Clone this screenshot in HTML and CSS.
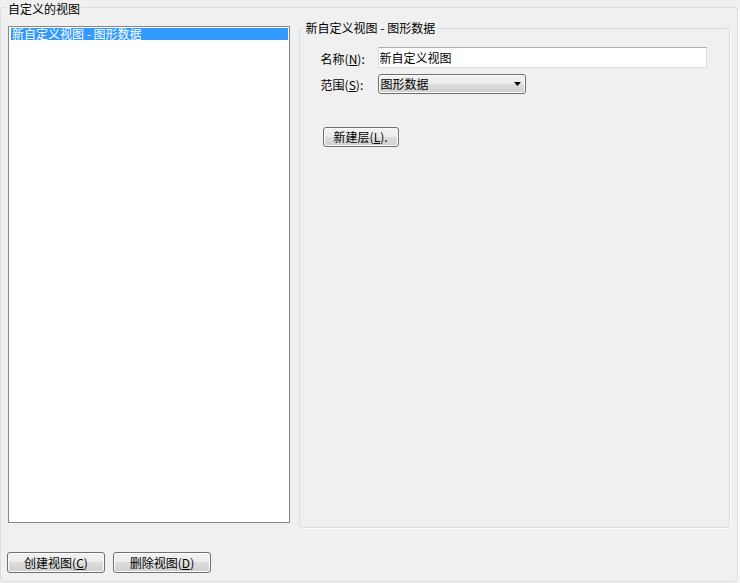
FILE: index.html
```html
<!DOCTYPE html>
<html lang="zh-CN">
<head>
    <meta charset="UTF-8">
    <title>自定义的视图</title>
    <link rel="stylesheet" href="styles.css">
</head>
<body>

<fieldset class="group outer-group">
    <legend class="group-title outer-title">自定义的视图</legend>

    <div class="main">
        <div class="listbox">
            <div class="list-item selected">新自定义视图 - 图形数据</div>
        </div>

        <fieldset class="group detail-group">
            <legend class="group-title detail-title">新自定义视图 - 图形数据</legend>

            <div class="field-row">
                <label class="field-label name-label" for="viewName">名称(<u>N</u>):</label>
                <input class="textbox" id="viewName" type="text" value="新自定义视图">
            </div>
            <div class="field-row scope-row">
                <label class="field-label scope-label">范围(<u>S</u>):</label>
                <div class="combo">
                    <span class="combo-text">图形数据</span>
                    <svg class="combo-arrow" width="7" height="4" viewBox="0 0 7 4"><polygon points="0,0 7,0 3.5,4" fill="#000"/></svg>
                </div>
            </div>

            <button class="btn layer-btn">新建层(<u>L</u>).</button>
        </fieldset>
    </div>

    <div class="actions">
        <button class="btn action-btn">创建视图(<u>C</u>)</button>
        <button class="btn action-btn">删除视图(<u>D</u>)</button>
    </div>
</fieldset>

</body>
</html>
```

FILE: styles.css
```css
body {
    margin: 0;
    background: #f0f0f0;
    font-family: "Noto Sans CJK SC", "Noto Sans", sans-serif;
    font-size: 12px;
    color: #000;
    overflow: hidden;
}

.group {
    box-sizing: border-box;
    margin: 0;
    border: 1px solid #d5dfe5;
    border-radius: 3px;
    box-shadow: 1px 1px 0 #fff;
    min-width: 0;
}

.group-title {
    line-height: 13px;
    padding: 0 1px;
    margin-left: -1px;
}

.outer-title {
    padding-top: 2px;
}

.outer-group {
    width: 738px;
    height: 582px;
    padding: 7px 7px 0 7px;
}

.main {
    display: flex;
    align-items: flex-start;
}

.listbox {
    box-sizing: border-box;
    width: 282px;
    height: 497px;
    margin-top: 4px;
    padding: 1px 1px 1px 2px;
    background: #fff;
    border: 1px solid #828790;
}

.list-item {
    height: 12px;
    line-height: 12px;
    padding-left: 1px;
    white-space: nowrap;
}

.list-item.selected {
    background: #3399ff;
    color: #fff;
}

.detail-group {
    width: 432px;
    height: 506px;
    margin-left: 9px;
    padding: 13px 4px 0 4px;
}

.detail-title {
    line-height: 12px;
    padding: 0 2px;
    margin-left: 0;
}

.field-row {
    display: flex;
    align-items: flex-start;
    margin-left: 17px;
}

.scope-row {
    margin-top: 6px;
}

.field-label {
    width: 57px;
    line-height: 12px;
    padding-top: 6px;
    white-space: nowrap;
}

.scope-label {
    padding-top: 5px;
}

.textbox {
    box-sizing: border-box;
    width: 329px;
    height: 21px;
    margin: 0;
    padding: 0 1px;
    border: 1px solid #d9dde4;
    border-top-color: #abadb3;
    background: #fff;
    font: inherit;
    color: #000;
    outline: none;
}

.btn,
.combo {
    box-sizing: border-box;
    border: 1px solid #707070;
    border-radius: 3px;
    background: linear-gradient(#f2f2f2 0%, #ebebeb 50%, #dddddd 50%, #cfcfcf 100%);
    box-shadow: inset 0 0 0 1px #fcfcfc;
    font: inherit;
    color: #000;
}

.btn {
    padding: 0;
    margin: 0;
    line-height: 12px;
}

.combo {
    display: flex;
    align-items: center;
    justify-content: space-between;
    width: 148px;
    height: 20px;
    padding: 0 4px 0 2px;
    line-height: 12px;
}

.combo-arrow {
    display: block;
}

.layer-btn {
    display: block;
    width: 76px;
    height: 20px;
    margin: 33px 0 0 19px;
}

.actions {
    display: flex;
    gap: 8px;
    margin: 24px 0 0 -1px;
}

.action-btn {
    width: 98px;
    height: 21px;
}
```
